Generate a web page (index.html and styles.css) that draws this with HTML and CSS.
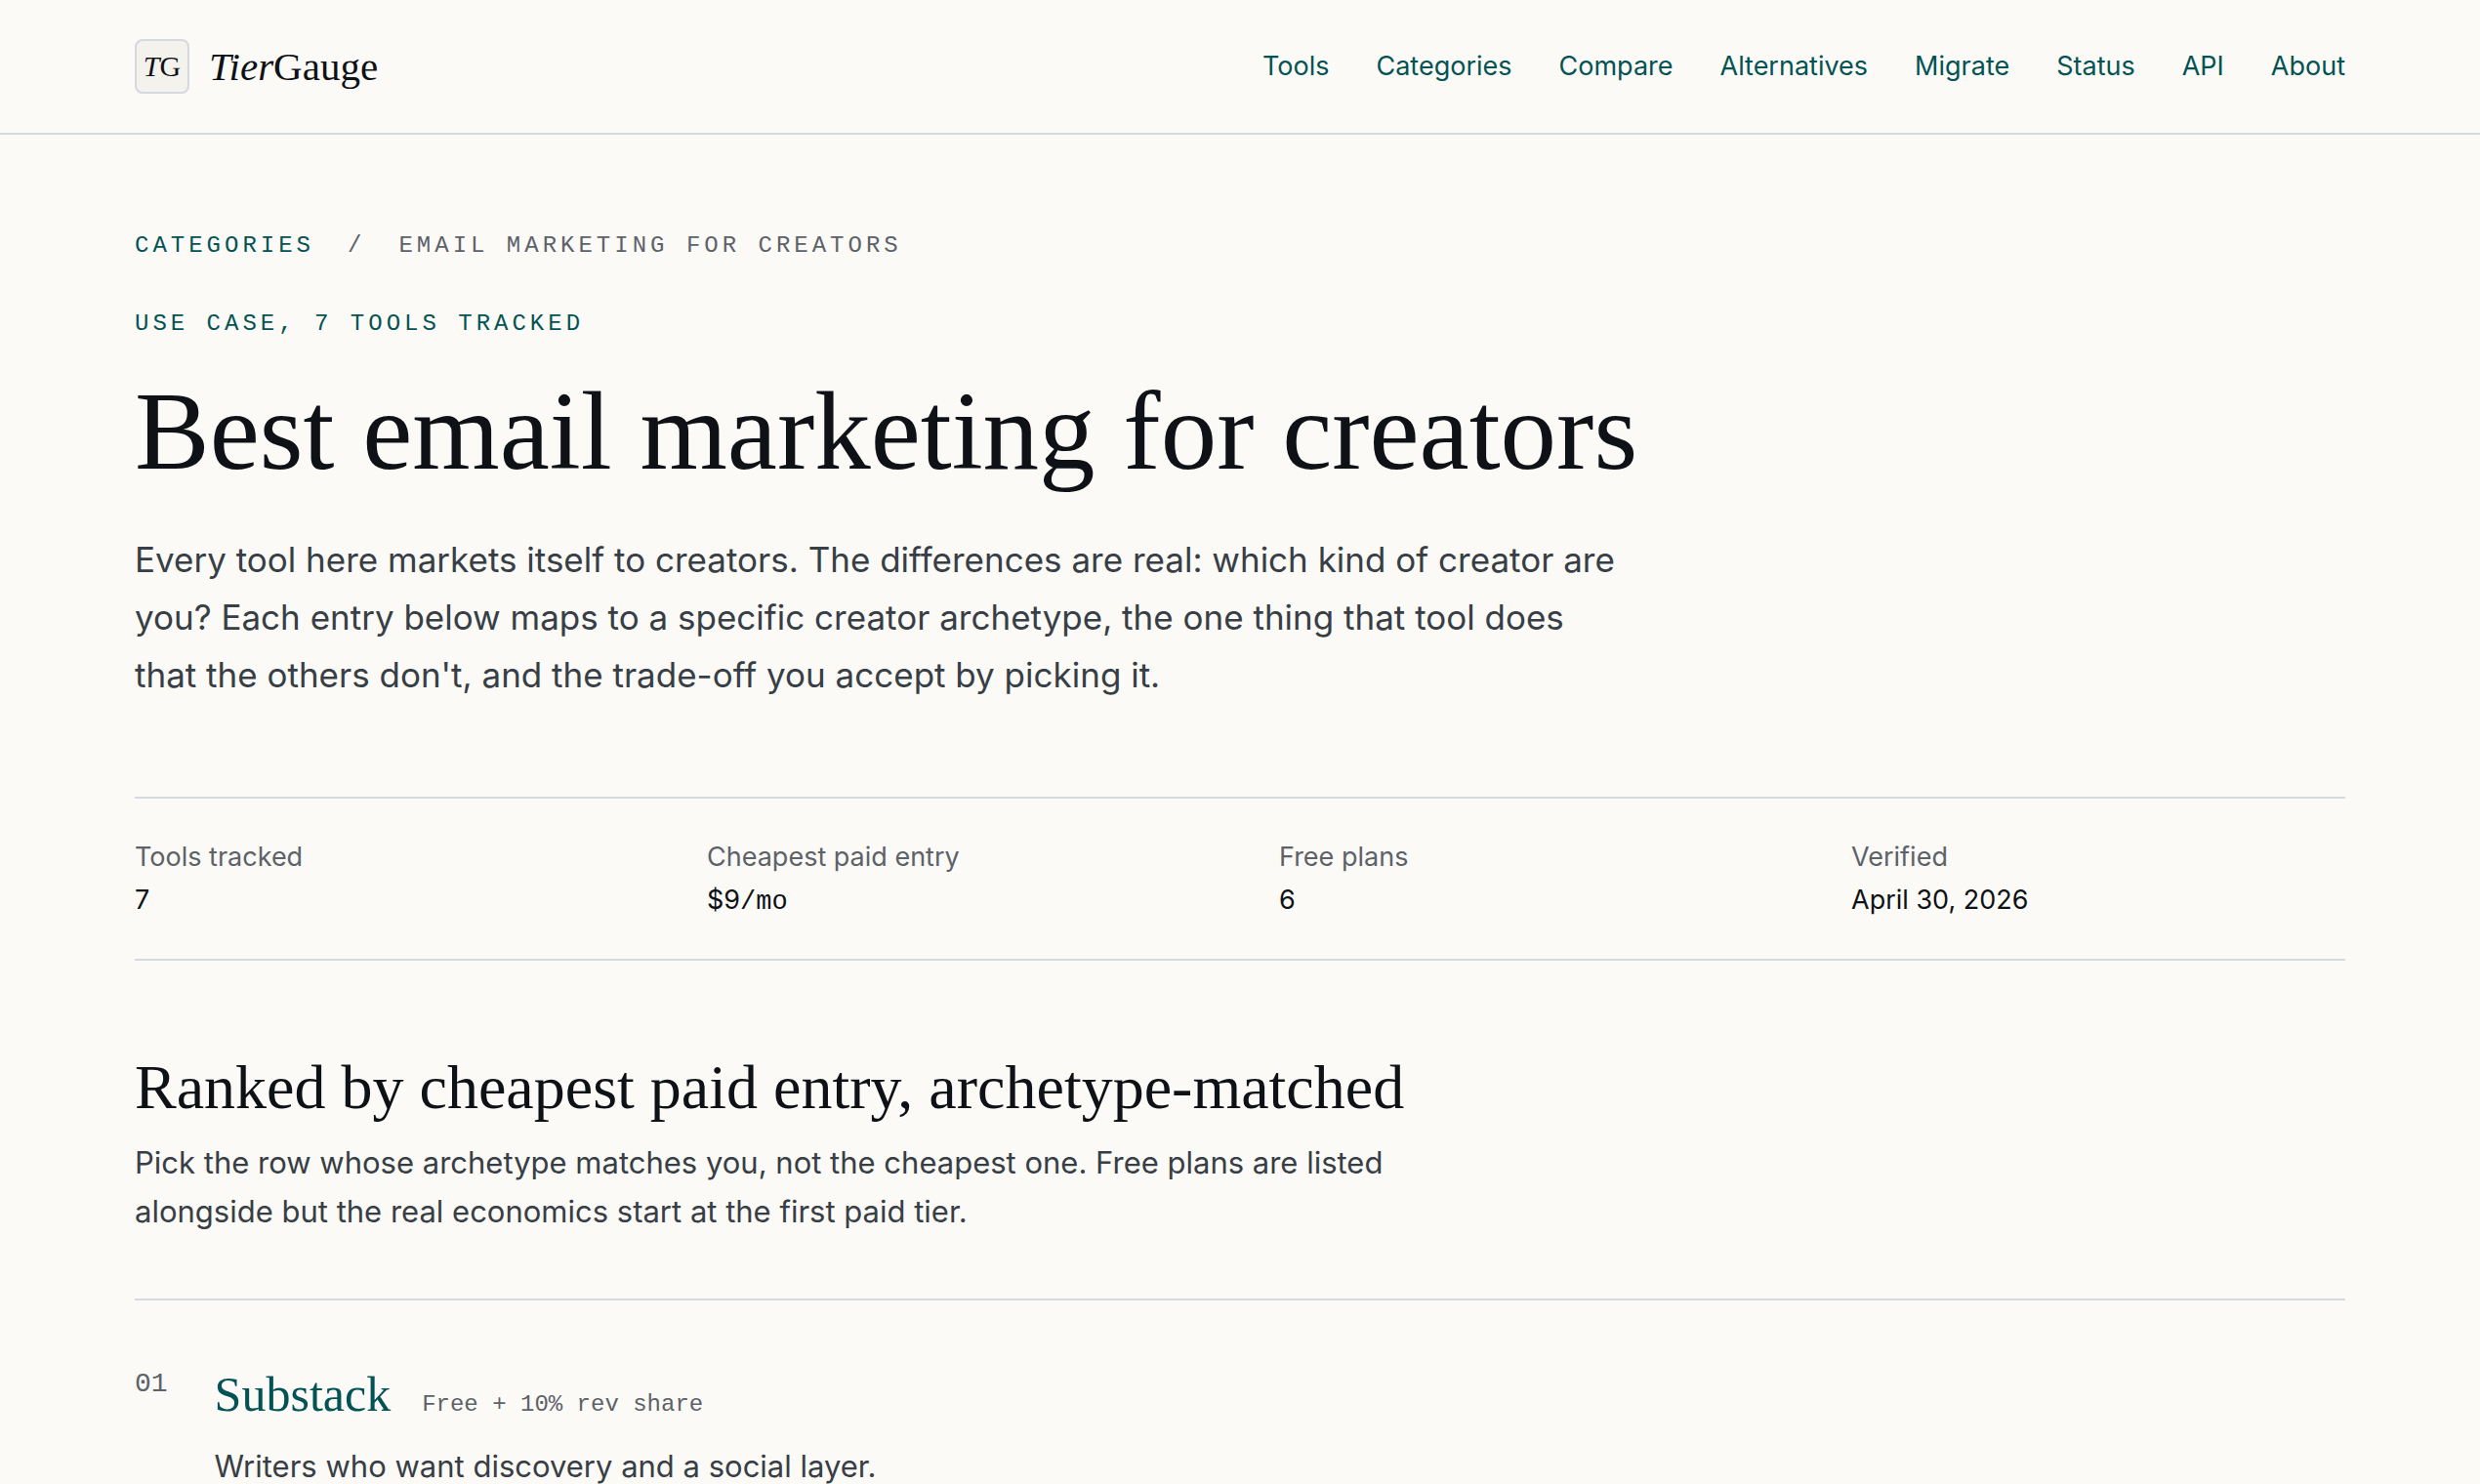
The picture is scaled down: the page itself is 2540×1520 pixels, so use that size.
FILE: index.html
```html
<!DOCTYPE html>
<html lang="en">
<head>
<meta charset="utf-8">
<meta name="viewport" content="width=device-width, initial-scale=1">
<title>Best email marketing for creators | TierGauge</title>
<link rel="stylesheet" href="styles.css">
</head>
<body>
<header class="site-header">
  <div class="container header-row">
    <a class="brand" href="#">
      <span class="brand-mark" aria-hidden="true"><span><i>T</i>G</span></span>
      <span class="brand-name"><i>Tier</i>Gauge</span>
    </a>
    <nav class="site-nav" aria-label="Main">
      <a href="#">Tools</a>
      <a href="#">Categories</a>
      <a href="#">Compare</a>
      <a href="#">Alternatives</a>
      <a href="#">Migrate</a>
      <a href="#">Status</a>
      <a href="#">API</a>
      <a href="#">About</a>
    </nav>
  </div>
</header>
<main class="container">
  <nav class="breadcrumb" aria-label="Breadcrumb">
    <a href="#">Categories</a>
    <span>/</span>
    <span>Email marketing for creators</span>
  </nav>
  <p class="eyebrow">Use case, 7 tools tracked</p>
  <h1 class="page-title">Best email marketing for creators</h1>
  <p class="lead">Every tool here markets itself to creators. The differences are real: which kind of creator are you? Each entry below maps to a specific creator archetype, the one thing that tool does that the others don't, and the trade-off you accept by picking it.</p>
  <dl class="facts">
    <div><dt>Tools tracked</dt><dd>7</dd></div>
    <div><dt>Cheapest paid entry</dt><dd>$9<span class="unit">/mo</span></dd></div>
    <div><dt>Free plans</dt><dd>6</dd></div>
    <div><dt>Verified</dt><dd>April 30, 2026</dd></div>
  </dl>
  <section>
    <h2 class="section-title">Ranked by cheapest paid entry, archetype-matched</h2>
    <p class="section-intro">Pick the row whose archetype matches you, not the cheapest one. Free plans are listed alongside but the real economics start at the first paid tier.</p>
    <ol class="ranking">
      <li class="entry">
        <span class="rank">01</span>
        <div>
          <div class="entry-head">
            <h3 class="entry-name"><a href="#">Substack</a></h3>
            <span class="price">Free + 10% rev share</span>
          </div>
          <p class="entry-text">Writers who want discovery and a social layer.</p>
        </div>
      </li>
    </ol>
  </section>
</main>
</body>
</html>
```
FILE: styles.css
```css
:root {
  --bg: #fbfaf7;
  --ink: #0e1216;
  --body: #383e45;
  --muted: #5d6269;
  --accent: #045354;
  --rule: #d5d8df;
  --serif: "Liberation Serif", "Times New Roman", serif;
  --sans: Inter, "Liberation Sans", sans-serif;
  --mono: "Liberation Mono", "Courier New", monospace;
}

* {
  box-sizing: border-box;
  margin: 0;
  padding: 0;
}

body {
  background: var(--bg);
  color: var(--ink);
  font-family: var(--sans);
  font-size: 27px;
  line-height: 44px;
}

a {
  color: var(--accent);
  text-decoration: none;
}

.container {
  max-width: 2360px;
  margin: 0 auto;
  padding: 0 48px;
}

.site-header {
  border-bottom: 2px solid var(--rule);
}

.header-row {
  display: flex;
  align-items: center;
  justify-content: space-between;
  padding-top: 40px;
  padding-bottom: 40px;
}

.brand {
  display: flex;
  align-items: center;
  gap: 20px;
  color: var(--ink);
  font-family: var(--serif);
}

.brand-mark {
  display: grid;
  place-items: center;
  width: 56px;
  height: 56px;
  border: 2px solid var(--rule);
  border-radius: 8px;
  background: #f3f2ed;
  font-size: 30px;
  line-height: 52px;
}

.brand-name {
  font-size: 41px;
  line-height: 56px;
}

.site-nav {
  display: flex;
  gap: 48px;
}

.breadcrumb {
  display: flex;
  gap: 34px;
  padding-top: 94px;
  color: var(--muted);
  font-family: var(--mono);
  font-size: 24px;
  line-height: 40px;
  letter-spacing: 4px;
  text-transform: uppercase;
}

.eyebrow {
  margin-top: 40px;
  color: var(--accent);
  font-family: var(--mono);
  font-size: 24px;
  line-height: 40px;
  letter-spacing: 4px;
  text-transform: uppercase;
}

.page-title {
  margin-top: 24px;
  font-family: var(--serif);
  font-size: 115px;
  font-weight: 400;
  line-height: 132px;
}

.lead {
  max-width: 1528px;
  margin-top: 36px;
  color: var(--body);
  font-size: 35px;
  line-height: 59px;
}

.facts {
  display: grid;
  grid-template-columns: repeat(4, 1fr);
  gap: 80px;
  margin-top: 95px;
  padding: 38px 0;
  border-top: 2px solid var(--rule);
  border-bottom: 2px solid var(--rule);
}

.facts dt {
  color: var(--muted);
}

.unit {
  font-family: var(--mono);
  line-height: 1;
}

.section-title {
  margin-top: 94px;
  font-family: var(--serif);
  font-size: 64px;
  font-weight: 400;
  line-height: 72px;
}

.section-intro {
  max-width: 1300px;
  margin-top: 16px;
  color: var(--body);
  font-size: 31px;
  line-height: 50px;
}

.ranking {
  margin-top: 64px;
  border-top: 2px solid var(--rule);
  list-style: none;
}

.entry {
  display: flex;
  gap: 48px;
  padding-top: 64px;
}

.rank {
  color: var(--muted);
  font-family: var(--mono);
  font-size: 28px;
}

.entry-head {
  display: flex;
  align-items: baseline;
  gap: 32px;
}

.entry-name {
  font-family: var(--serif);
  font-size: 50px;
  font-weight: 400;
  line-height: 64px;
}

.price {
  color: var(--muted);
  font-family: var(--mono);
  font-size: 24px;
}

.entry-text {
  margin-top: 16px;
  color: var(--body);
  font-size: 31px;
  line-height: 50px;
}
```
